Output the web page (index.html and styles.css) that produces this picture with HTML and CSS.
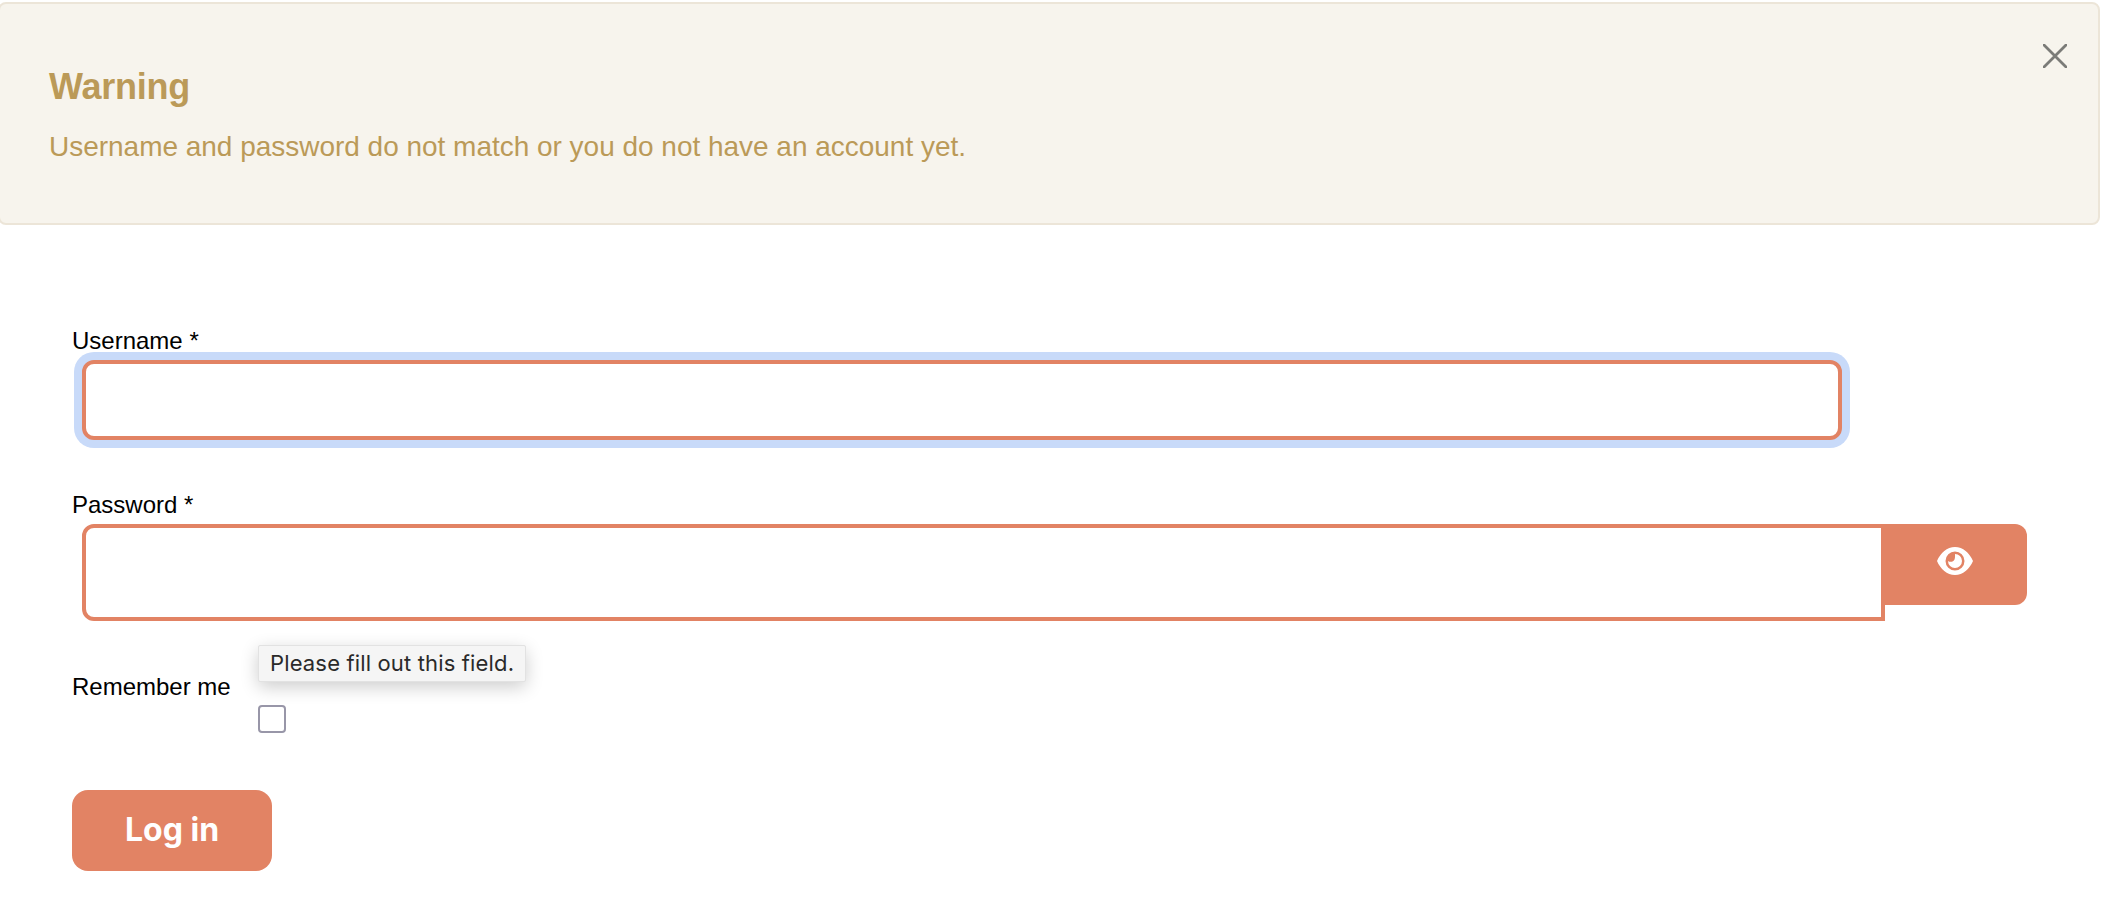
FILE: index.html
```html
<!DOCTYPE html>
<html lang="en">
<head>
<meta charset="utf-8">
<title>Log in</title>
<link rel="stylesheet" href="styles.css">
</head>
<body>
<div class="alert">
  <h2 class="alert-title">Warning</h2>
  <p class="alert-text">Username and password do not match or you do not have an account yet.</p>
  <button class="alert-close" type="button" aria-label="Close">
    <svg viewBox="0 0 24 24" width="24" height="24"><path d="M1 1L23 23M23 1L1 23" fill="none" stroke="#7b7b78" stroke-width="2.8" stroke-linecap="round"/></svg>
  </button>
</div>
<form class="login">
  <label class="field-label" for="username">Username *</label>
  <input class="text-input focused" id="username" type="text">
  <label class="field-label password-label" for="password">Password *</label>
  <div class="password-row">
    <input class="text-input password-input" id="password" type="password">
    <button class="eye-btn" type="button" aria-label="Show password">
      <svg viewBox="0 0 36 28" width="36" height="28">
        <path fill="#fff" fill-rule="evenodd" d="M18 0C26 0 32.500 6 36 14C32.500 22 26 28 18 28C10 28 3.500 22 0 14C3.500 6 10 0 18 0ZM18 4.500A9.500 9.500 0 1 0 18 23.500A9.500 9.500 0 1 0 18 4.500Z"/>
        <path fill="#fff" d="M18 7A7 7 0 1 1 11 14C13 15.500 16.500 15 17.500 12.500C18.300 10.500 18 8.500 18 7Z"/>
      </svg>
    </button>
  </div>
  <div class="remember-row">
    <label class="remember-label" for="remember">Remember me</label>
    <div class="remember-box">
      <div class="tooltip">Please fill out this field.</div>
      <input class="checkbox" id="remember" type="checkbox">
    </div>
  </div>
  <button class="submit" type="button">Log in</button>
</form>
</body>
</html>
```
FILE: styles.css
```css
* { box-sizing: border-box; }
html, body { margin: 0; padding: 0; background: #fff; }
body {
  padding-top: 2px;
  height: 910px;
  overflow: hidden;
  font-family: "Liberation Sans", Arial, sans-serif;
  color: #000;
}
.alert {
  position: relative;
  height: 223px;
  margin-right: 20px;
  margin-left: -2px;
  padding: 62px 49px 0;
  background: #f7f4ed;
  border: 2px solid #ece5d8;
  border-radius: 8px;
  color: #bb9a58;
}
.alert-title {
  margin: 0;
  font-size: 36px;
  line-height: 42px;
  font-weight: 700;
  letter-spacing: -0.25px;
}
.alert-text {
  margin: 21px 0 0;
  font-size: 28px;
  line-height: 36px;
  letter-spacing: -0.02px;
}
.alert-close {
  position: absolute;
  top: 40px;
  right: 31px;
  width: 24px;
  height: 24px;
  padding: 0;
  border: 0;
  background: none;
  line-height: 0;
}
.login {
  display: flex;
  flex-direction: column;
  align-items: flex-start;
  padding: 102px 0 0 72px;
}
.field-label {
  font-size: 24px;
  line-height: 28px;
}
.text-input {
  display: block;
  margin: 5px 0 0 10px;
  border: 4px solid #e28364;
  background: #fff;
  outline: none;
  border-radius: 12px;
}
.focused {
  width: 1760px;
  height: 80px;
  box-shadow: 0 0 0 8px #c8daf9;
}
.password-label { margin-top: 51px; }
.password-row {
  display: flex;
  align-items: flex-start;
  margin: 5px 0 0 10px;
}
.password-input {
  width: 1803px;
  height: 97px;
  margin: 0;
  border-radius: 12px 0 0 12px;
}
.eye-btn {
  display: flex;
  align-items: center;
  justify-content: center;
  width: 142px;
  height: 81px;
  padding: 0 2px 7px 0;
  border: 0;
  border-radius: 0 12px 12px 0;
  background: #e28364;
}
.remember-row {
  display: flex;
  align-items: flex-start;
  margin-top: 24px;
}
.remember-label {
  margin-top: 28px;
  font-size: 24px;
  line-height: 28px;
  width: 186px;
}
.remember-box {
  position: relative;
  height: 88px;
  padding-top: 60px;
}
.tooltip {
  position: absolute;
  top: 0;
  left: 0;
  width: 268px;
  height: 37px;
  padding-left: 11px;
  background: #f5f5f5;
  border: 1px solid #e2e2e2;
  border-radius: 2px;
  box-shadow: 0 5px 18px rgba(0, 0, 0, 0.2);
  color: #2a2a2a;
  font-family: Inter, "Liberation Sans", sans-serif;
  font-size: 22px;
  letter-spacing: 0.15px;
  line-height: 35px;
  white-space: nowrap;
}
.checkbox {
  display: block;
  appearance: none;
  width: 28px;
  height: 28px;
  margin: 0;
  background: #fff;
  border: 2px solid #9896a8;
  border-radius: 4px;
}
.submit {
  width: 200px;
  height: 81px;
  margin-top: 57px;
  padding: 0 0 3px;
  border: 0;
  border-radius: 16px;
  background: #e28364;
  color: #fff;
  font-family: Inter, "Liberation Sans", sans-serif;
  font-size: 32px;
  font-weight: 700;
}
```
